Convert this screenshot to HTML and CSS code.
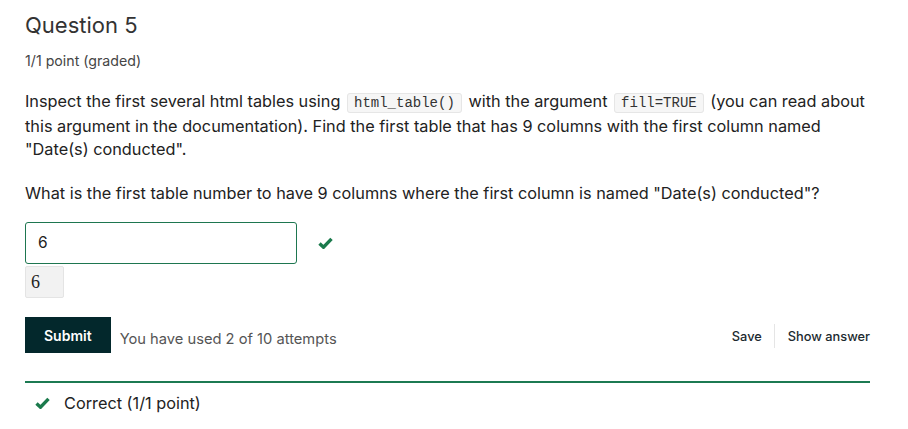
FILE: index.html
```html
<!DOCTYPE html>
<html>
<head>
<meta charset="utf-8">
<link rel="stylesheet" href="styles.css">
</head>
<body>
<div class="problem">
  <h3 class="title">Question 5</h3>
  <div class="points">1/1 point (graded)</div>
  <p class="text first">Inspect the first several html tables using <code>html_table()</code> with the argument <code>fill=TRUE</code> (you can read about this argument in the documentation). Find the first table that has 9 columns with the first column named "Date(s) conducted".</p>
  <p class="text q">What is the first table number to have 9 columns where the first column is named "Date(s) conducted"?</p>
  <div class="answer-row">
    <div class="input">6</div>
    <svg class="check" width="15" height="12" viewBox="0 0 15 12"><path d="M1.5 6.5 L5.5 10.2 L13.5 1.8" fill="none" stroke="#1b7a4c" stroke-width="3.4"/></svg>
  </div>
  <div class="preview">6</div>
  <div class="actions">
    <button class="submit">Submit</button>
    <span class="attempts">You have used 2 of 10 attempts</span>
    <div class="links">
      <span class="link">Save</span>
      <span class="sep"></span>
      <span class="link">Show answer</span>
    </div>
  </div>
  <div class="notice">
    <svg class="check" width="15" height="12" viewBox="0 0 15 12"><path d="M1.5 6.5 L5.5 10.2 L13.5 1.8" fill="none" stroke="#1b7a4c" stroke-width="3.4"/></svg>
    <span>Correct (1/1 point)</span>
  </div>
</div>
</body>
</html>
```
FILE: styles.css
```css
html, body { margin: 0; padding: 0; background: #fff; }
body { font-family: Inter, "Noto Sans", sans-serif; color: #313131; }
.problem { padding: 10px 38px 0 25px; }
.title { margin: 0; font-size: 22px; font-weight: 400; line-height: 30px; color: #333; }
.points { margin-top: 12px; font-size: 14.2px; line-height: 18px; color: #454545; }
.text { margin: 0; font-size: 16.3px; line-height: 23px; color: #222; }
.text.first { margin-top: 20px; }
.text.q { margin-top: 21px; }
code { font-family: "Liberation Mono", "Courier New", monospace; font-size: 14px; background: #f6f6f6; border: 1px solid #e6e6e6; border-radius: 3px; padding: 1px 6px; margin: 0 2px; color: #333; }
.answer-row { display: flex; align-items: center; margin-top: 17px; }
.input { width: 246px; height: 40px; border: 1px solid #1e7650; border-radius: 3px; padding: 0 12px; font-size: 15.5px; line-height: 40px; color: #222; }
.answer-row .check { margin-left: 21px; }
.preview { margin-top: 2px; height: 30px; width: 32px; padding-left: 5px; background: #f2f2f2; border: 1px solid #e4e4e4; border-radius: 2px; font-family: "Liberation Serif", serif; font-size: 18px; line-height: 30px; color: #222; }
.actions { display: flex; align-items: center; margin-top: 19px; }
.submit { background: #03282c; color: #fff; border: 0; border-radius: 0; font-family: Inter, sans-serif; font-weight: 600; font-size: 14px; height: 36px; padding: 0 19px; }
.attempts { margin-left: 9px; margin-top: 7px; font-size: 14.7px; color: #555; }
.links { margin-left: auto; display: flex; align-items: center; margin-top: 2px; }
.link { font-size: 12.8px; font-weight: 500; color: #1c2a2f; }
.sep { width: 1px; height: 24px; background: #e5e5e5; margin: 0 13px 0 12px; }
.notice { margin-top: 28px; border-top: 2px solid #1c7a52; padding: 9px 0 0 10px; display: flex; align-items: center; font-size: 16.3px; line-height: 22px; color: #222; }
.notice .check { margin-right: 14px; }
```
